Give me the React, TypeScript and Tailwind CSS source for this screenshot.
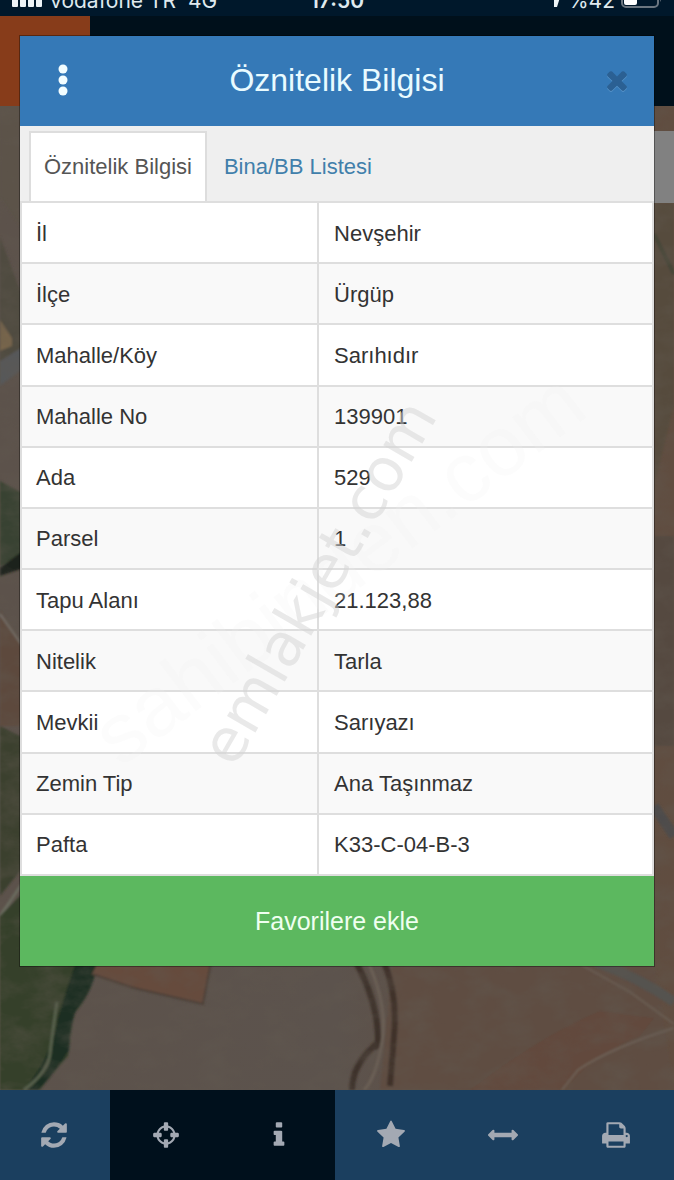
import { useState } from 'react';

const ICONS = {
  refresh:
    'M1639 1056q0 5-1 7-64 268-268 434.5t-478 166.5q-146 0-282.5-55t-243.5-157l-129 129q-19 19-45 19t-45-19-19-45v-448q0-26 19-45t45-19h448q26 0 45 19t19 45-19 45l-137 137q71 66 161 102t187 36q134 0 250-65t186-179q11-17 53-117 8-23 30-23h192q13 0 22.5 9.5t9.5 22.5zm25-800v448q0 26-19 45t-45 19h-448q-26 0-45-19t-19-45 19-45l138-138q-148-137-349-137-134 0-250 65t-186 179q-11 17-53 117-8 23-30 23h-199q-13 0-22.5-9.5t-9.5-22.5v-7q65-268 270-434.5t480-166.5q146 0 284 55.5t245 156.5l130-129q19-19 45-19t45 19 19 45z',
  crosshairs:
    'M1325 1024h-109q-26 0-45-19t-19-45v-128q0-26 19-45t45-19h109q-32-108-112.5-188.5t-188.5-112.5v109q0 26-19 45t-45 19h-128q-26 0-45-19t-19-45v-109q-108 32-188.5 112.5t-112.5 188.5h109q26 0 45 19t19 45v128q0 26-19 45t-45 19h-109q32 108 112.5 188.5t188.5 112.5v-109q0-26 19-45t45-19h128q26 0 45 19t19 45v109q108-32 188.5-112.5t112.5-188.5zm339-192v128q0 26-19 45t-45 19h-143q-37 161-154.5 278.5t-278.5 154.5v143q0 26-19 45t-45 19h-128q-26 0-45-19t-19-45v-143q-161-37-278.5-154.5t-154.5-278.5h-143q-26 0-45-19t-19-45v-128q0-26 19-45t45-19h143q37-161 154.5-278.5t278.5-154.5v-143q0-26 19-45t45-19h128q26 0 45 19t19 45v143q161 37 278.5 154.5t154.5 278.5h143q26 0 45 19t19 45z',
  info: 'M1216 1344v128q0 26-19 45t-45 19h-512q-26 0-45-19t-19-45v-128q0-26 19-45t45-19h64v-384h-64q-26 0-45-19t-19-45v-128q0-26 19-45t45-19h384q26 0 45 19t19 45v576h64q26 0 45 19t19 45zm-128-1152v192q0 26-19 45t-45 19h-256q-26 0-45-19t-19-45v-192q0-26 19-45t45-19h256q26 0 45 19t19 45z',
  star: 'M1728 647q0 22-26 48l-363 354 86 500q1 7 1 20 0 21-10.5 35.5t-30.5 14.5q-19 0-40-12l-449-236-449 236q-22 12-40 12-21 0-31.5-14.5t-10.5-35.5q0-6 2-20l86-500-364-354q-25-27-25-48 0-37 56-46l502-73 225-455q19-41 49-41t49 41l225 455 502 73q56 9 56 46z',
  measure:
    'M1792 896q0 26-19 45l-256 256q-19 19-45 19t-45-19-19-45v-128h-1024v128q0 26-19 45t-45 19-45-19l-256-256q-19-19-19-45t19-45l256-256q19-19 45-19t45 19 19 45v128h1024v-128q0-26 19-45t45-19 45 19l256 256q19 19 19 45z',
  print:
    'M448 1536h896v-256h-896v256zm0-640h896v-384h-160q-40 0-68-28t-28-68v-160h-640v640zm1152 64q0-26-19-45t-45-19-45 19-19 45 19 45 45 19 45-19 19-45zm128 0v416q0 13-9.5 22.5t-22.5 9.5h-224v160q0 40-28 68t-68 28h-960q-40 0-68-28t-28-68v-160h-224q-13 0-22.5-9.5t-9.5-22.5v-416q0-79 56.5-135.5t135.5-56.5h64v-544q0-40 28-68t68-28h672q40 0 88 20t76 48l152 152q28 28 48 76t20 88v256h64q79 0 135.5 56.5t56.5 135.5z',
  times:
    'M1490 1322q0 40-28 68l-136 136q-28 28-68 28t-68-28l-294-294-294 294q-28 28-68 28t-68-28l-136-136q-28-28-28-68t28-68l294-294-294-294q-28-28-28-68t28-68l136-136q28-28 68-28t68 28l294 294 294-294q28-28 68-28t68 28l136 136q28 28 28 68t-28 68l-294 294 294 294q28 28 28 68z',
};

const Icon = ({ name, className = '' }: { name: keyof typeof ICONS; className?: string }) => (
  <svg viewBox="0 0 1792 1792" fill="currentColor" className={className} aria-hidden="true">
    <path d={ICONS[name]} />
  </svg>
);

const rows = [
  { label: 'İl', value: 'Nevşehir' },
  { label: 'İlçe', value: 'Ürgüp' },
  { label: 'Mahalle/Köy', value: 'Sarıhıdır' },
  { label: 'Mahalle No', value: '139901' },
  { label: 'Ada', value: '529' },
  { label: 'Parsel', value: '1' },
  { label: 'Tapu Alanı', value: '21.123,88' },
  { label: 'Nitelik', value: 'Tarla' },
  { label: 'Mevkii', value: 'Sarıyazı' },
  { label: 'Zemin Tip', value: 'Ana Taşınmaz' },
  { label: 'Pafta', value: 'K33-C-04-B-3' },
];

const tools: { icon: keyof typeof ICONS; label: string; active?: boolean }[] = [
  { icon: 'refresh', label: 'Yenile' },
  { icon: 'crosshairs', label: 'Konum', active: true },
  { icon: 'info', label: 'Bilgi', active: true },
  { icon: 'star', label: 'Favoriler' },
  { icon: 'measure', label: 'Ölçüm' },
  { icon: 'print', label: 'Yazdır' },
];

/* ================= STATUS BAR ================= */
const StatusBar = () => (
  <div className="flex h-4 items-end justify-between overflow-hidden bg-[#00182b] pr-3 pb-px pl-3 font-['Inter',sans-serif] text-[21px] leading-5 text-[#dfe9ee]">
    <div className="flex flex-1 items-end gap-2">
      <svg viewBox="0 0 30 20" className="mb-2 h-5 w-[30px]" fill="#eef4f7" aria-hidden="true">
        <rect x="0" y="12" width="6" height="8" rx="1" />
        <rect x="8" y="9" width="6" height="11" rx="1" />
        <rect x="16" y="5" width="6" height="15" rx="1" />
        <rect x="24" y="0" width="6" height="20" rx="1" />
      </svg>
      <span className="mb-1">vodafone TR</span>
      <span className="mb-1 ml-1">4G</span>
    </div>
    <span className="mb-1 font-semibold">17:50</span>
    <div className="flex flex-1 items-end justify-end gap-1.5">
      <svg viewBox="0 0 16 16" className="mb-2 size-4" fill="#eef4f7" aria-hidden="true">
        <path d="M16 0 11 16H8V8H0z" />
      </svg>
      <span className="mb-1">%42</span>
      <svg viewBox="0 0 41 18" className="mb-[7px] h-[18px] w-[41px]" fill="none" aria-hidden="true">
        <rect x="1" y="1" width="36" height="16" rx="4" stroke="#6b7680" strokeWidth="2" />
        <rect x="3" y="3" width="13" height="12" rx="2" fill="#ffffff" />
        <path d="M39 6q2 3 0 6z" fill="#6b7680" />
      </svg>
    </div>
  </div>
);

/* ================= MAP ================= */
const SatelliteMap = () => (
  <svg
    viewBox="0 0 674 984"
    preserveAspectRatio="none"
    className="absolute inset-0 h-full w-full"
    aria-hidden="true"
  >
    <defs>
      <filter id="soil" x="0" y="0" width="100%" height="100%">
        <feTurbulence type="fractalNoise" baseFrequency="0.03 0.05" numOctaves="5" seed="4" />
        <feColorMatrix values="0 0 0 0 0.12  0 0 0 0 0.1  0 0 0 0 0.08  1.6 0 0 0 -0.6" />
      </filter>
      <filter id="soft">
        <feGaussianBlur stdDeviation="1.2" />
      </filter>
      <linearGradient id="fields" x1="0" x2="1">
        <stop offset="0" stopColor="#5c524b" />
        <stop offset="0.5" stopColor="#5c534d" />
        <stop offset="0.75" stopColor="#5f4e43" />
        <stop offset="1" stopColor="#604d40" />
      </linearGradient>
    </defs>
    <rect width="674" height="984" fill="url(#fields)" />
    <g filter="url(#soft)">
      {/* left strip */}
      <path d="M0 90 20 120V0H0z" fill="#5c5348" />
      <path d="M0 130 22 190V250L0 270z" fill="#504c40" />
      <path d="M0 214 12 232 12 240 0 245z" fill="#77654c" />
      <path d="M0 255 24 240V262L0 280z" fill="#56585a" />
      <path d="M0 375 24 388V450L0 460z" fill="#394331" />
      <path d="M0 462 24 444V462L0 470z" fill="#1e211c" />
      <path d="M0 505 24 540V620H0z" fill="#5d4a3c" />
      <path d="M0 508 24 542" stroke="#77726c" strokeWidth="2" />
      <path d="M0 620 24 632V760L0 790z" fill="#3b402f" />
      <path d="M0 810 24 775" stroke="#6b6c5f" strokeWidth="3" />
      {/* river bank */}
      <path d="M0 810 20 790 98 858Q90 890 74 908 70 930 68 950 50 970 40 984H0z" fill="#34402b" />
      <path d="M98 856Q92 888 76 904 70 920 69 944 54 968 38 984H24Q52 950 58 912 66 884 76 856z" fill="#1f2d21" />
      <path d="M57 896Q52 930 50 948T24 984" stroke="#56604c" strokeWidth="3" fill="none" />
      {/* parcels */}
      <path d="M98 856H211L203 898 134 882 92 868z" fill="#664b3d" />
      <path d="M211 856 203 898 134 882 92 868" stroke="#4c4038" strokeWidth="2" fill="none" />
      <path d="M392 860 654 856 674 984H380z" fill="#5e4d42" />
      <path d="M470 984Q540 930 600 905L654 912 640 930Q590 950 565 984z" fill="#624a3c" />
      <path d="M356 856Q374 890 377 918T374 940Q352 960 352 984" stroke="#3c302a" strokeWidth="6" fill="none" />
      <path d="M384 856Q398 890 394 930L390 980" stroke="#3f322b" strokeWidth="6" fill="none" />
      <path d="M368 856Q388 900 382 936T364 984" stroke="#6c6056" strokeWidth="3" fill="none" />
      <path d="M580 858 630 886 674 918" stroke="#6b5d52" strokeWidth="2" fill="none" />
      <path d="M596 856Q640 872 674 896" stroke="#55534f" strokeWidth="10" fill="none" />
      <path d="M674 922Q610 942 578 964L562 984" stroke="#6d6056" strokeWidth="2" fill="none" />
      {/* right strip */}
      <path d="M654 97H674V300L654 380z" fill="#564b3e" />
      <path d="M654 128 674 168" stroke="#464638" strokeWidth="4" />
      <path d="M654 430H674V640H654z" fill="#544a40" />
      <path d="M654 700 674 730" stroke="#4d4c4b" strokeWidth="10" />
    </g>
    <rect width="674" height="984" filter="url(#soil)" opacity="0.55" />
  </svg>
);

const App = () => {
  const [activeTab, setActiveTab] = useState<'info' | 'list'>('info');

  return (
    <div className="relative flex min-h-screen flex-col overflow-hidden bg-[#00101b] font-['Liberation_Sans',Arial,sans-serif]">
      <StatusBar />

      <header className="flex h-[90px] bg-[#00101b]">
        <div className="w-[90px] bg-[#873c1a]" />
      </header>

      <main className="relative flex flex-1 flex-col items-end pt-[25px]">
        <SatelliteMap />
        <div className="relative h-[72px] w-12 bg-[#818181]" />
      </main>

      {/* TOOLBAR */}
      <nav className="relative h-[90px] bg-[#1b3f5f]">
        <div className="mr-0.5 -ml-0.5 grid h-full grid-cols-6">
          {tools.map((tool) => (
            <button
              key={tool.icon}
              aria-label={tool.label}
              className={`flex items-center justify-center text-[#a3a9b3] ${
                tool.active ? 'bg-[#00101c]' : 'bg-[#1b3f5f]'
              }`}
            >
              <Icon name={tool.icon} className="size-[30px]" />
            </button>
          ))}
        </div>
      </nav>

      {/* MODAL */}
      <div className="absolute inset-0 px-5 pt-9">
        <section
          role="dialog"
          aria-labelledby="dialog-title"
          className="relative overflow-hidden bg-white shadow-[0_0_0_1px_rgba(0,0,0,0.35)]"
        >
          <div className="flex h-[90px] items-center justify-between bg-[#3579b7] px-[22px] pb-0.5">
            <button aria-label="Menü" className="flex w-[42px] justify-center">
              <svg viewBox="0 0 10 32" className="h-8 w-2.5" fill="#f2fdff" aria-hidden="true">
                <circle cx="5" cy="5" r="4.5" />
                <circle cx="5" cy="16" r="4.5" />
                <circle cx="5" cy="27" r="4.5" />
              </svg>
            </button>
            <h1 id="dialog-title" className="text-[32px] leading-10 text-[#e9fbff]">
              Öznitelik Bilgisi
            </h1>
            <button aria-label="Kapat" className="flex w-[42px] justify-end text-[#2b6093]">
              <Icon name="times" className="size-[30px] shrink-0 drop-shadow-[0_1px_0_#5592c8]" />
            </button>
          </div>

          {/* TABS */}
          <div role="tablist" className="flex h-[75px] items-end gap-0.5 bg-[#efefef] pl-[9px] text-[22px] leading-7">
            <button
              role="tab"
              aria-selected={activeTab === 'info'}
              onClick={() => setActiveTab('info')}
              className={`h-[70px] border-2 border-b-0 px-[13px] ${
                activeTab === 'info'
                  ? 'border-[#dddddd] bg-white text-[#555555]'
                  : 'border-transparent text-[#417fab]'
              }`}
            >
              Öznitelik Bilgisi
            </button>
            <button
              role="tab"
              aria-selected={activeTab === 'list'}
              onClick={() => setActiveTab('list')}
              className={`h-[70px] border-2 border-b-0 px-[13px] ${
                activeTab === 'list'
                  ? 'border-[#dddddd] bg-white text-[#555555]'
                  : 'border-transparent text-[#417fab]'
              }`}
            >
              Bina/BB Listesi
            </button>
          </div>

          <table className="h-[675px] w-full table-fixed border-collapse border-2 border-[#dedede] text-[22px] leading-7 text-[#333333]">
            <colgroup>
              <col className="w-[47%]" />
              <col />
            </colgroup>
            <tbody>
              {rows.map((row) => (
                <tr key={row.label} className="even:bg-[#f9f9f9]">
                  <th scope="row" className="border-2 border-[#dedede] px-3.5 pt-0.5 text-left font-normal">
                    {row.label}
                  </th>
                  <td className="border-2 border-[#dedede] px-[15px] pt-0.5">{row.value}</td>
                </tr>
              ))}
            </tbody>
          </table>

          <button className="block h-[90px] w-full bg-[#5cb85f] text-[25px] leading-8 text-[#effff0]">
            Favorilere ekle
          </button>

          {/* WATERMARKS */}
          <span
            aria-hidden="true"
            className="pointer-events-none absolute top-[532px] left-[318px] -translate-x-1/2 -translate-y-1/2 -rotate-37 text-[84px] leading-none whitespace-nowrap text-[#f0f0f0]/20"
          >
            sahibinden.com
          </span>
          <span
            aria-hidden="true"
            className="pointer-events-none absolute top-[546px] left-[298px] -translate-x-1/2 -translate-y-1/2 -rotate-60 font-['DejaVu_Sans',sans-serif] text-[60px] leading-none whitespace-nowrap text-[#d4d4d4]/50"
          >
            emlakjet.com
          </span>
        </section>
      </div>
    </div>
  );
};

export default App;
